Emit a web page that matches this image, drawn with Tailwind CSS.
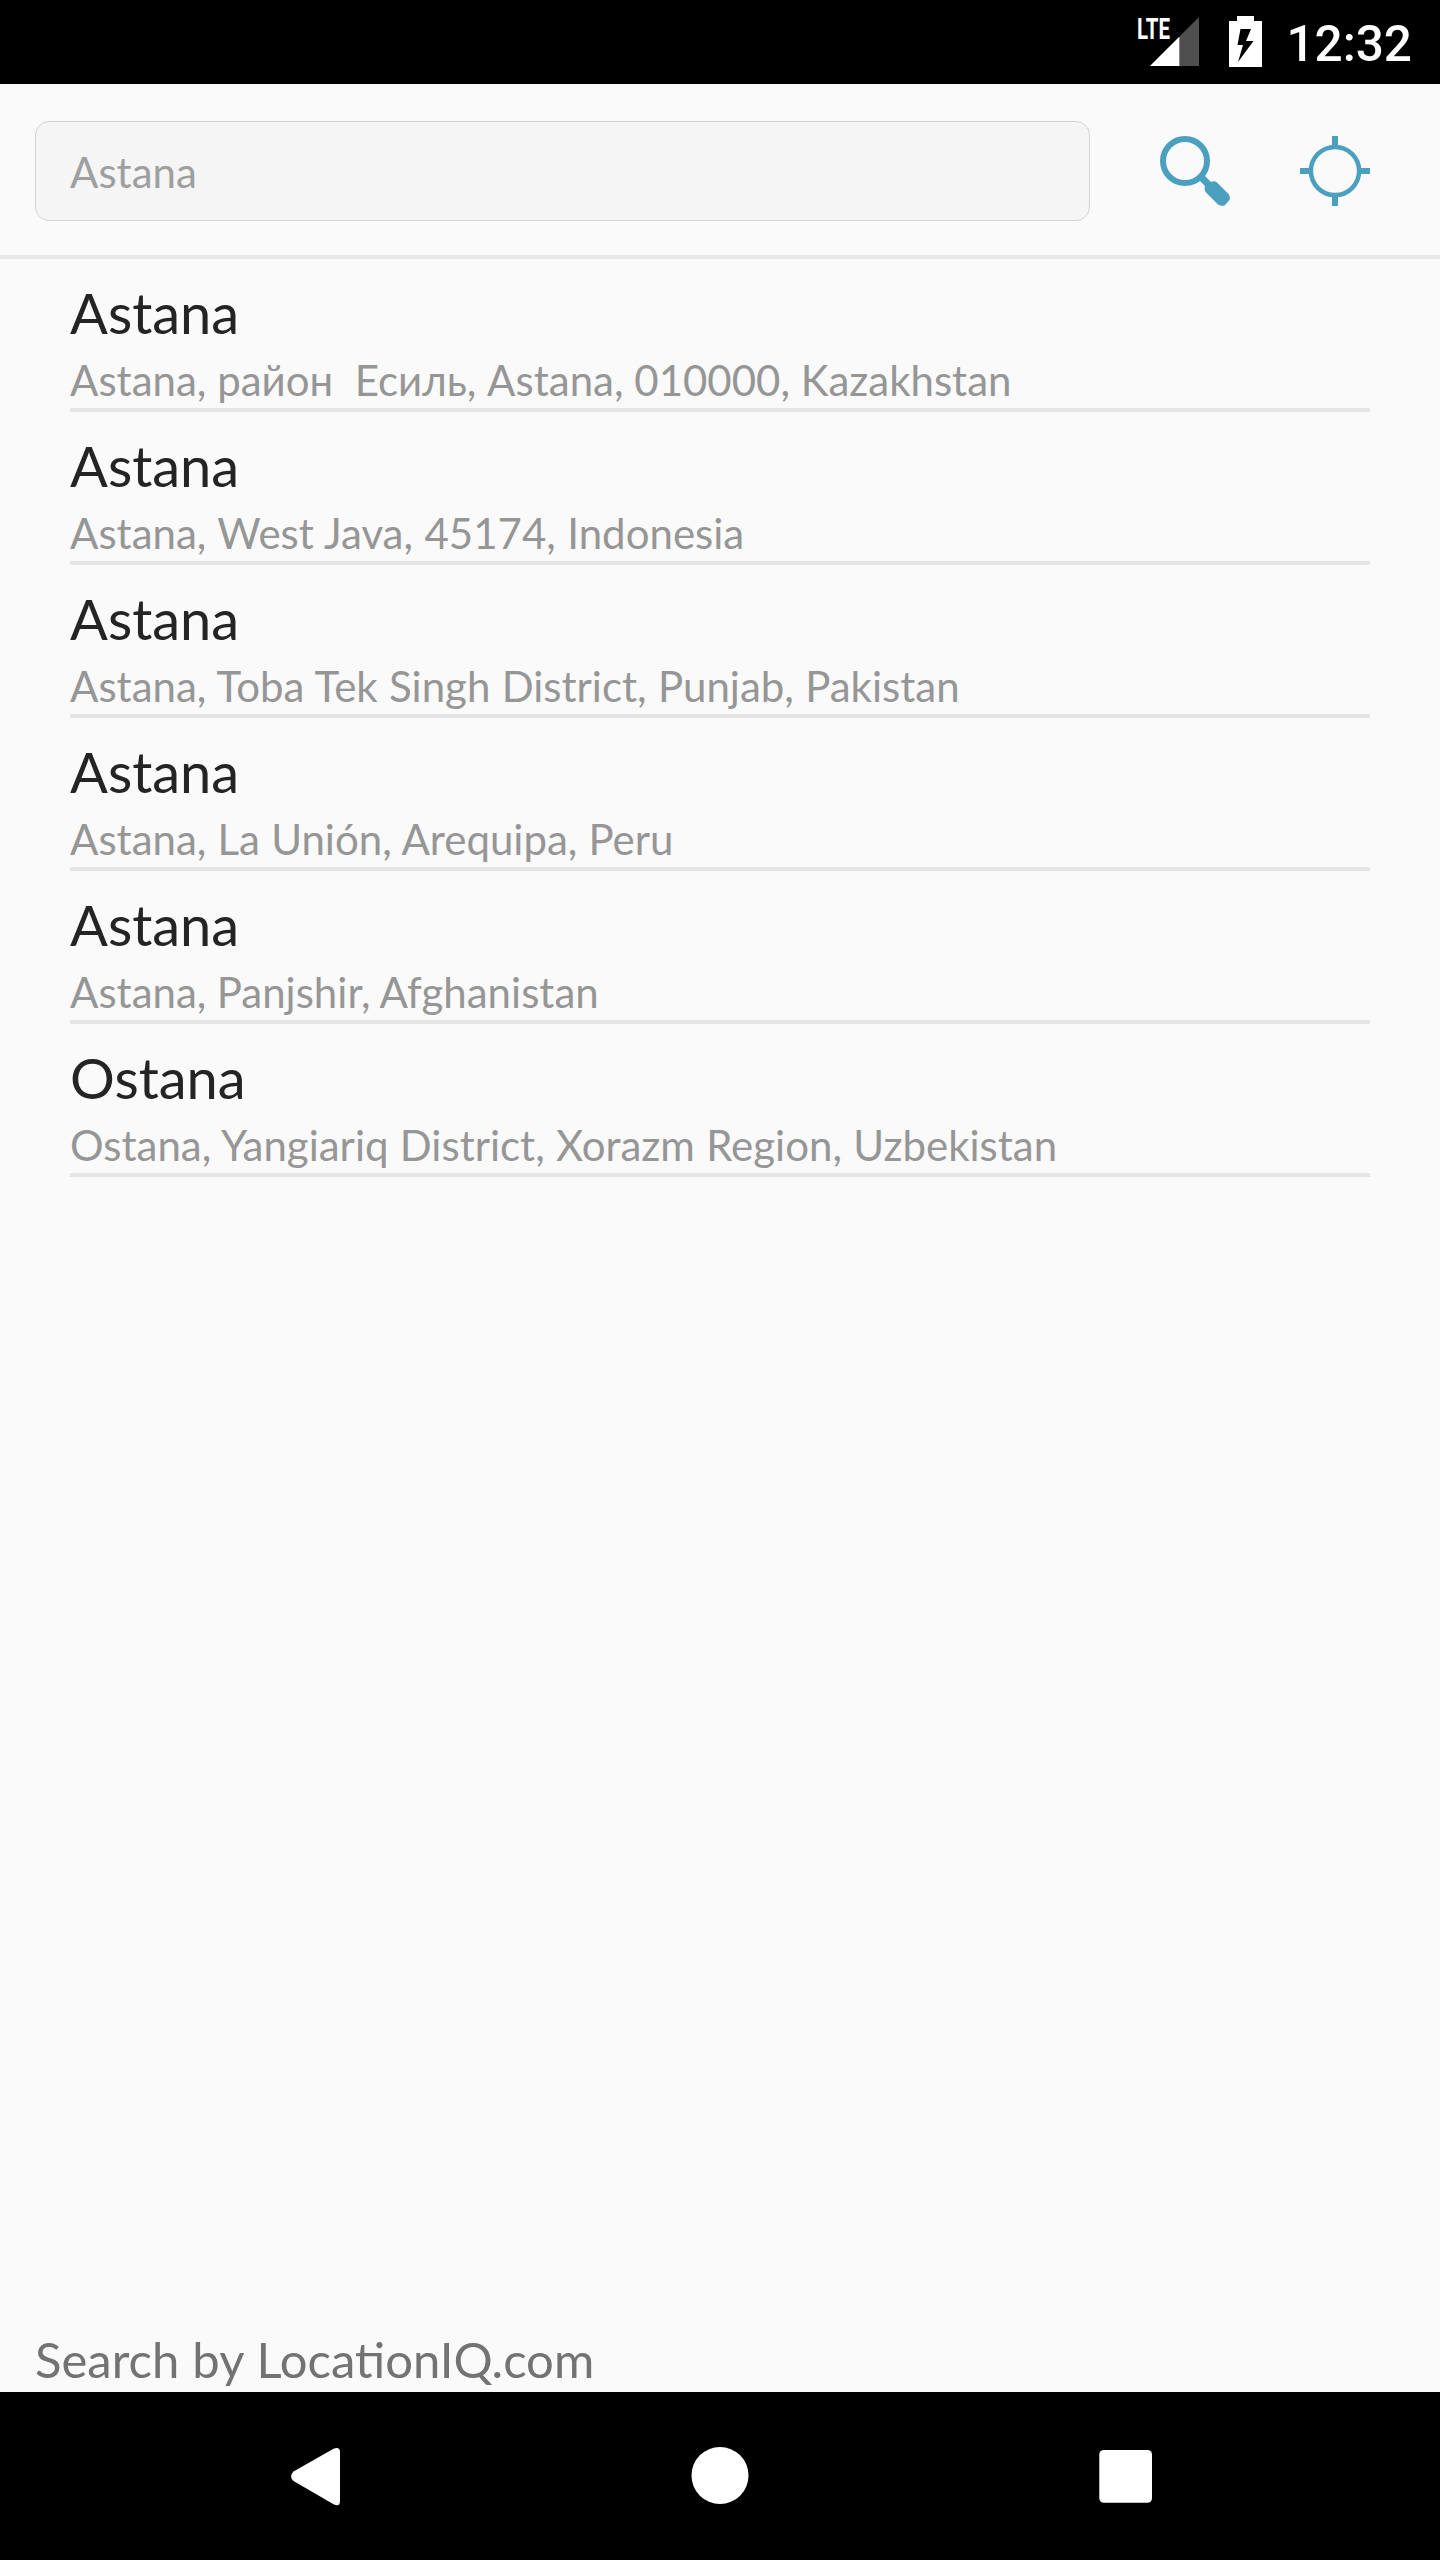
<!DOCTYPE html>
<html lang="en">

<head>
    <meta charset="UTF-8" />
    <title>Search location</title>
    <script src="https://cdn.jsdelivr.net/npm/@tailwindcss/browser@4"></script>
</head>

<body class="bg-[#fafafa] font-['Lato','Noto_Sans',sans-serif]">

    <div class="w-[1440px] h-[2560px] flex flex-col overflow-hidden">

        <!-- Status bar -->
        <div class="h-[84px] shrink-0 bg-black text-white flex justify-end pr-7">
            <svg class="w-[64px] h-[84px] mr-[29px]" viewBox="0 0 64 84">
                <path d="M63 17V66H14z" fill="#4f4f4f" />
                <path d="M43.3 36.7V66H14z" fill="#fff" />
                <text x="1" y="39" textLength="33" lengthAdjust="spacingAndGlyphs" font-family="Roboto" font-weight="700" font-size="29" fill="#fff">LTE</text>
            </svg>
            <svg class="w-[33px] h-[84px] mr-[24px]" viewBox="0 0 33 84">
                <path d="M8 16H25V21H33V67H0V21H8z" fill="#fff" />
                <path d="M11.5 29H22L17 41H24.500L9 62L14 45H8.500z" fill="#000" />
            </svg>
            <div class="font-['Roboto',sans-serif] font-medium text-[49.5px] leading-[88px]">12:32</div>
        </div>

        <!-- Search bar -->
        <div class="h-[175px] shrink-0 flex items-start border-b-4 border-[#e9e9e9] pl-[35px] pt-[37px]">
            <input type="text" value="Astana" class="w-[1055px] h-[100px] border border-[#d3d3d3] bg-[#f5f5f5] rounded-[14px] px-[34px] pt-[2px] text-[42px] text-[#9f9f9f] outline-none" />
            <svg class="w-[70px] h-[70px] ml-[70px] mt-[15px]" viewBox="0 0 70 70" fill="none">
                <circle cx="25" cy="25" r="22" stroke="#4b9fbf" stroke-width="6" />
                <path d="M40 40L50 50" stroke="#4b9fbf" stroke-width="7" />
                <path d="M45 50L52 45.500Q54.500 44.500 57 46.500L68.500 58Q70.500 60.500 69.500 64L64.500 69.500Q61 70.500 58 68.500L46 56.500Q44 54 45 50z" fill="#4b9fbf" />
            </svg>
            <svg class="w-[70px] h-[70px] ml-[70px] mt-[15px]" viewBox="0 0 70 70" fill="none" stroke="#4b9fbf">
                <circle cx="35" cy="35" r="24.100" stroke-width="4.500" />
                <path d="M35 0V10M35 60V70M0 35H10M60 35H70" stroke-width="6" />
            </svg>
        </div>

        <!-- Results -->
        <ul class="flex-1 px-[70px]">
            <li class="h-[153px] border-b-4 border-[#e5e5e5] pt-[20px]">
                <div class="text-[56px] leading-[68px] text-[#242424]">Astana</div>
                <div class="mt-[8px] text-[42px] leading-[50px] text-[#969696] whitespace-pre">Astana, район  Есиль, Astana, 010000, Kazakhstan</div>
            </li>
            <li class="h-[153px] border-b-4 border-[#e5e5e5] pt-[20px]">
                <div class="text-[56px] leading-[68px] text-[#242424]">Astana</div>
                <div class="mt-[8px] text-[42px] leading-[50px] text-[#969696] [word-spacing:0.7px]">Astana, West Java, 45174, Indonesia</div>
            </li>
            <li class="h-[153px] border-b-4 border-[#e5e5e5] pt-[20px]">
                <div class="text-[56px] leading-[68px] text-[#242424]">Astana</div>
                <div class="mt-[8px] text-[42px] leading-[50px] text-[#969696] [word-spacing:0.6px]">Astana, Toba Tek Singh District, Punjab, Pakistan</div>
            </li>
            <li class="h-[153px] border-b-4 border-[#e5e5e5] pt-[20px]">
                <div class="text-[56px] leading-[68px] text-[#242424]">Astana</div>
                <div class="mt-[8px] text-[42px] leading-[50px] text-[#969696] [word-spacing:0.4px]">Astana, La Unión, Arequipa, Peru</div>
            </li>
            <li class="h-[153px] border-b-4 border-[#e5e5e5] pt-[20px]">
                <div class="text-[56px] leading-[68px] text-[#242424]">Astana</div>
                <div class="mt-[8px] text-[42px] leading-[50px] text-[#969696] [word-spacing:-0.4px]">Astana, Panjshir, Afghanistan</div>
            </li>
            <li class="h-[153px] border-b-4 border-[#e5e5e5] pt-[20px]">
                <div class="text-[56px] leading-[68px] text-[#242424]">Ostana</div>
                <div class="mt-[8px] text-[42px] leading-[50px] text-[#969696] [word-spacing:0.6px]">Ostana, Yangiariq District, Xorazm Region, Uzbekistan</div>
            </li>
        </ul>

        <div class="px-[35px] pb-[3px] text-[49px] leading-[59px] text-[#737373] [word-spacing:0.6px]">Search by LocationIQ.com</div>

        <!-- Navigation bar -->
        <div class="h-[168px] shrink-0 bg-black">
            <svg class="w-full h-full" viewBox="0 0 1440 168" fill="#fff">
                <path d="M293.500 79.500L333.500 56.700Q340 54.500 340 60V109Q340 115 334 112.500L293.500 89Q288.500 84.300 293.500 79.500z" />
                <circle cx="720" cy="83.500" r="28.500" />
                <rect x="1099.300" y="58" width="52.700" height="52.700" rx="4.500" />
            </svg>
        </div>
    </div>

</body>

</html>
